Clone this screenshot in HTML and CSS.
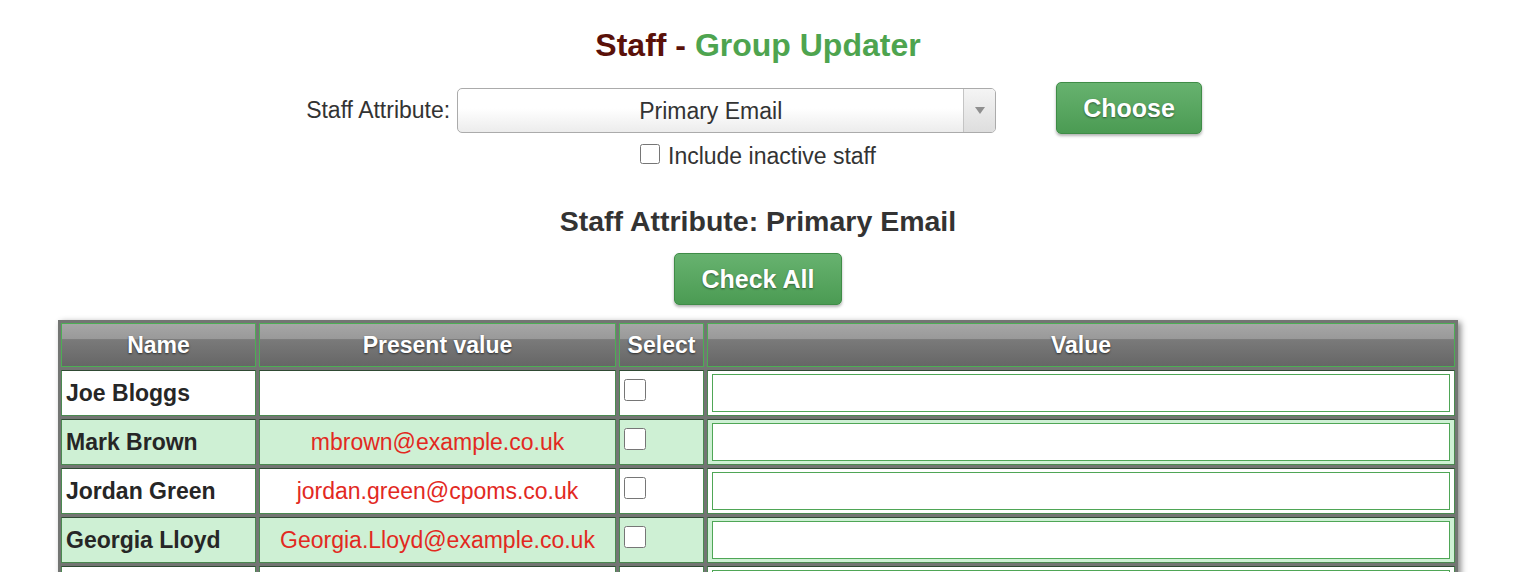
FILE: index.html
```html
<!DOCTYPE html>
<html lang="en">

<head>
    <meta charset="UTF-8">
    <title>Staff - Group Updater</title>
    <link rel="stylesheet" href="styles.css">
</head>

<body>
    <div class="page">
        <h1><span class="title-staff">Staff -</span> <span class="title-group">Group Updater</span></h1>

        <form class="chooser">
            <label for="attribute">Staff Attribute:</label>
            <div class="select-box">
                <select id="attribute" name="attribute">
                    <option>Primary Email</option>
                </select>
                <span class="select-arrow"></span>
            </div>
            <button type="button" class="btn-green btn-choose">Choose</button>
        </form>
        <div class="inactive">
            <input type="checkbox" id="inactive" name="inactive">
            <label for="inactive">Include inactive staff</label>
        </div>

        <h2>Staff Attribute: Primary Email</h2>
        <div class="check-all">
            <button type="button" class="btn-green">Check All</button>
        </div>

        <table class="staff-table">
            <tr class="head-row">
                <th class="col-name">Name</th>
                <th class="col-present">Present value</th>
                <th class="col-select">Select</th>
                <th>Value</th>
            </tr>
            <tr>
                <td class="name">Joe Bloggs</td>
                <td class="present"></td>
                <td class="select"><input type="checkbox"></td>
                <td class="value"><input type="text"></td>
            </tr>
            <tr class="alt">
                <td class="name">Mark Brown</td>
                <td class="present">mbrown@example.co.uk</td>
                <td class="select"><input type="checkbox"></td>
                <td class="value"><input type="text"></td>
            </tr>
            <tr>
                <td class="name">Jordan Green</td>
                <td class="present">jordan.green@cpoms.co.uk</td>
                <td class="select"><input type="checkbox"></td>
                <td class="value"><input type="text"></td>
            </tr>
            <tr class="alt">
                <td class="name">Georgia Lloyd</td>
                <td class="present">Georgia.Lloyd@example.co.uk</td>
                <td class="select"><input type="checkbox"></td>
                <td class="value"><input type="text"></td>
            </tr>
            <tr>
                <td class="name"></td>
                <td class="present"></td>
                <td class="select"><input type="checkbox"></td>
                <td class="value"><input type="text"></td>
            </tr>
        </table>
    </div>
</body>

</html>
```

FILE: styles.css
```css
* {
    box-sizing: border-box;
}

html {
    background-color: #ffffff;
    color: #333333;
    font-family: 'Liberation Sans', 'Arial', sans-serif;
    font-size: 23px;
}

body {
    margin: 0;
}

.page {
    width: 1400px;
    margin-left: 58px;
    text-align: center;
}

h1 {
    margin: 27px 0 0;
    font-size: 32px;
    line-height: 36px;
}

.title-staff {
    color: #5a1109;
}

.title-group {
    color: #4ea44f;
}

/* attribute chooser */
.chooser {
    display: flex;
    align-items: center;
    justify-content: center;
    padding-right: 8px;
    margin-top: 24px;
}

.chooser label {
    margin-right: 7px;
}

.select-box {
    display: flex;
    width: 539px;
    height: 45px;
    border: 1px solid #ababab;
    border-radius: 5px;
    background: linear-gradient(#ffffff, #ffffff 45%, #ececec);
    overflow: hidden;
}

.select-box select {
    flex: 1;
    appearance: none;
    border: none;
    background: transparent;
    font-family: inherit;
    font-size: 23px;
    color: #333333;
    text-align: center;
    text-align-last: center;
    padding: 0;
}

.select-arrow {
    display: flex;
    align-items: center;
    justify-content: center;
    width: 32px;
    border-left: 1px solid #c4c4c4;
    background: linear-gradient(#f4f4f4, #dedede);
}

.select-arrow::after {
    content: "";
    border-left: 5px solid transparent;
    border-right: 5px solid transparent;
    border-top: 7px solid #8f8f8f;
}

.btn-green {
    border: 1px solid #3f8c47;
    border-radius: 5px;
    background: linear-gradient(#67b26f, #4b9b53);
    color: #ffffff;
    font-family: inherit;
    font-size: 25px;
    font-weight: bold;
    line-height: 28px;
    padding: 11px 26px;
    text-shadow: 0 1px 2px rgba(0, 0, 0, 0.45);
    box-shadow: 0 2px 3px rgba(0, 0, 0, 0.3);
    cursor: pointer;
}

.btn-choose {
    margin-left: 60px;
    margin-top: -5px;
}

.inactive {
    display: flex;
    align-items: center;
    justify-content: center;
    margin-top: 9px;
    line-height: 26px;
}

.inactive input {
    width: 20px;
    height: 20px;
    margin: 0 8px 4px 0;
}

h2 {
    margin: 36px 0 0;
    font-size: 28.5px;
    line-height: 32px;
}

.check-all {
    margin-top: 16px;
}

/* staff table */
.staff-table {
    width: 1400px;
    margin-top: 15px;
    border-spacing: 3px 3.5px;
    background-color: #737573;
    box-shadow: 3px 2px 6px rgba(0, 0, 0, 0.45);
    text-align: left;
}

.staff-table th {
    border: 1px solid #4cae54;
    background: linear-gradient(#a6a6a6, #999999 36%, #7a7a7a 37%, #666666);
    color: #ffffff;
    font-size: 23px;
    text-align: center;
    text-shadow: 0 1px 2px rgba(0, 0, 0, 0.6);
    padding: 0 4px;
}

.head-row {
    height: 44px;
}

.col-name {
    width: 195px;
}

.col-present {
    width: 357px;
}

.col-select {
    width: 85px;
}

.staff-table td {
    height: 46px;
    border: 1px solid #4a8a50;
    border-top-color: #2f4a33;
    background-color: #ffffff;
    padding: 3px 4px;
}

.staff-table .alt td {
    background-color: #cef0d4;
}

.name {
    font-weight: bold;
    color: #262626;
}

.present {
    color: #e2291f;
    text-align: center;
}

.select {
    vertical-align: middle;
}

.select input {
    width: 22px;
    height: 22px;
    margin: 0 0 4px 0;
}

.value input {
    width: 100%;
    height: 38px;
    border: 1px solid #4fa656;
    background-color: #ffffff;
}
```
